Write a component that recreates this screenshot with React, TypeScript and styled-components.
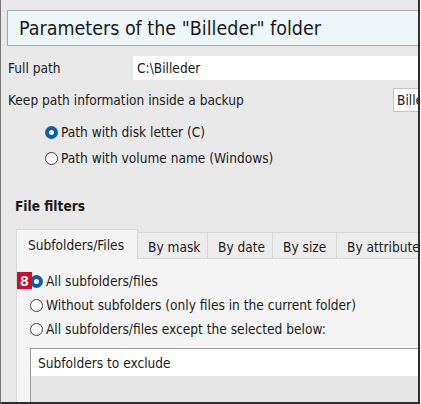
import React from "react";
import styled, { createGlobalStyle } from "styled-components";

const GlobalStyle = createGlobalStyle`
    body {
        margin: 0;
        background: #ffffff;
        font-family: "DejaVu Sans Condensed", "DejaVu Sans", sans-serif;
        color: #1a1a1a;
    }
`;

const Frame = styled.div`
    position: relative;
    width: 417px;
    height: 392px;
    background: #e8e8e8;
    border-left: 1px solid #777;
    border-right: 2px solid #2e2e2e;
    border-bottom: 2px solid #2e2e2e;
    overflow: hidden;
    padding-top: 10px;
    font-size: 13.6px;
`;

const Header = styled.div`
    margin-left: 6px;
    height: 34px;
    display: flex;
    align-items: center;
    padding-left: 11px;
    background: #eef6fa;
    border: 1px solid #a3a7a9;
    border-right: none;
    font-size: 19.5px;
    white-space: nowrap;
`;

const Row = styled.div<{ $top: number }>`
    display: flex;
    align-items: center;
    height: 24px;
    margin-top: ${(p) => p.$top}px;
    white-space: nowrap;
`;

const Label = styled.div<{ $width: number }>`
    width: ${(p) => p.$width}px;
    flex-shrink: 0;
    padding-left: 7px;
    box-sizing: border-box;
`;

const TextBox = styled.div`
    flex: 1;
    height: 100%;
    display: flex;
    align-items: center;
    padding-left: 4px;
    background: #ffffff;
`;

const Combo = styled.div`
    flex: 1;
    height: 22px;
    display: flex;
    align-items: center;
    padding-left: 3px;
    background: #ffffff;
    border: 1px solid #c4c4c4;
    border-right: none;
`;

const RadioList = styled.div<{ $left: number; $gap: number; $top: number }>`
    display: flex;
    flex-direction: column;
    gap: ${(p) => p.$gap}px;
    margin-top: ${(p) => p.$top}px;
    padding-left: ${(p) => p.$left}px;
`;

const RadioRow = styled.div`
    display: flex;
    align-items: center;
    gap: 3px;
    height: 18px;
    white-space: nowrap;
`;

const RadioDot = styled.span<{ $on?: boolean }>`
    width: 13px;
    height: 13px;
    box-sizing: border-box;
    border-radius: 50%;
    flex-shrink: 0;
    background: #ffffff;
    border: ${(p) => (p.$on ? "4px solid #0a5fa8" : "1px solid #3a3a3a")};
`;

const SectionTitle = styled.div`
    margin-top: 31px;
    height: 16px;
    line-height: 16px;
    padding-left: 14px;
    font-weight: bold;
`;

const Tabs = styled.div`
    display: flex;
    align-items: flex-end;
    margin-top: 15px;
    margin-left: 15px;
    height: 30px;
`;

const Tab = styled.div<{ $active?: boolean; $width: number }>`
    width: ${(p) => p.$width}px;
    flex-shrink: 0;
    height: ${(p) => (p.$active ? 30 : 27)}px;
    box-sizing: border-box;
    display: flex;
    align-items: center;
    padding-left: ${(p) => (p.$active ? 11 : 10)}px;
    padding-top: ${(p) => (p.$active ? 0 : 2)}px;
    white-space: nowrap;
    background: ${(p) => (p.$active ? "#f4f4f4" : "#ececec")};
    border: 1px solid #d8d8d8;
    border-bottom: ${(p) => (p.$active ? "none" : "1px solid #d8d8d8")};
    border-left: ${(p) => (p.$active ? "1px solid #d8d8d8" : "none")};
`;

const Panel = styled.div`
    position: relative;
    margin-left: 15px;
    height: 200px;
    background: #f4f4f4;
    border-left: 1px solid #d8d8d8;
    padding-left: 13px;
    padding-top: 13px;
`;

const Badge = styled.div`
    position: absolute;
    left: 0;
    top: 13px;
    width: 15px;
    height: 17px;
    background: #c8102e;
    color: #ffffff;
    font-family: "Liberation Sans", Arial, sans-serif;
    font-weight: bold;
    font-size: 15px;
    display: flex;
    align-items: center;
    justify-content: center;
`;

const ListBox = styled.div`
    margin-top: 10px;
    height: 60px;
    background: #e6e6e6;
    border: 1px solid #9c9c9c;
    border-right: none;
`;

const ListHeader = styled.div`
    height: 27px;
    display: flex;
    align-items: center;
    padding-left: 7px;
    background: #ffffff;
`;

const tabs = [
    { label: "Subfolders/Files", width: 122, active: true },
    { label: "By mask", width: 70 },
    { label: "By date", width: 65 },
    { label: "By size", width: 64 },
    { label: "By attributes", width: 110 },
];

export default function App() {
    return (
        <>
            <GlobalStyle />
            <Frame>
                <Header>Parameters of the "Billeder" folder</Header>
                <Row $top={10}>
                    <Label $width={132}>Full path</Label>
                    <TextBox>C:\Billeder</TextBox>
                </Row>
                <Row $top={8}>
                    <Label $width={392}>Keep path information inside a backup</Label>
                    <Combo>Billeder</Combo>
                </Row>
                <RadioList $left={44} $gap={8} $top={11}>
                    <RadioRow>
                        <RadioDot $on />
                        Path with disk letter (C)
                    </RadioRow>
                    <RadioRow>
                        <RadioDot />
                        Path with volume name (Windows)
                    </RadioRow>
                </RadioList>
                <SectionTitle>File filters</SectionTitle>
                <Tabs>
                    {tabs.map((t) => (
                        <Tab key={t.label} $active={t.active} $width={t.width}>
                            {t.label}
                        </Tab>
                    ))}
                </Tabs>
                <Panel>
                    <Badge>8</Badge>
                    <RadioList $left={0} $gap={6} $top={0}>
                        <RadioRow>
                            <RadioDot $on />
                            All subfolders/files
                        </RadioRow>
                        <RadioRow>
                            <RadioDot />
                            Without subfolders (only files in the current folder)
                        </RadioRow>
                        <RadioRow>
                            <RadioDot />
                            All subfolders/files except the selected below:
                        </RadioRow>
                    </RadioList>
                    <ListBox>
                        <ListHeader>Subfolders to exclude</ListHeader>
                    </ListBox>
                </Panel>
            </Frame>
        </>
    );
}
